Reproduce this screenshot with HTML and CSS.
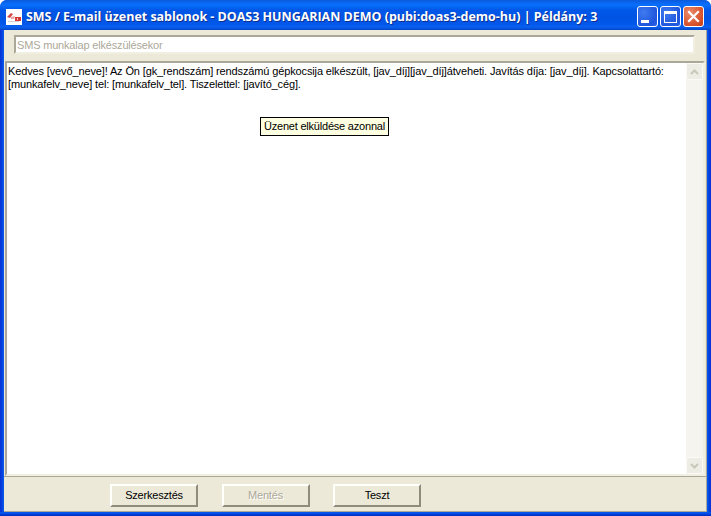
FILE: index.html
```
<!DOCTYPE html>
<html lang="hu">
<head>
<meta charset="utf-8">
<title>SMS / E-mail üzenet sablonok</title>
<link rel="stylesheet" href="styles.css">
</head>
<body>
<div class="window">
  <header class="titlebar">
    <svg class="app-icon" width="16" height="16" viewBox="0 0 16 16"><rect width="16" height="16" fill="#fff"/><path d="M1 8 L5 4 L7 5 L4 9 Z" fill="#d84848"/><path d="M5 8 L9 7 L8 10 L5 10 Z" fill="#eaa0a0"/><rect x="9" y="8" width="6" height="4" fill="#d83838"/><rect x="11" y="9" width="1" height="2" fill="#f4c0c0"/><rect x="2" y="12" width="11" height="1" fill="#d0d0d8"/></svg>
    <span class="title-text">SMS / E-mail üzenet sablonok - DOAS3 HUNGARIAN DEMO (pubi:doas3-demo-hu) | Példány: 3</span>
    <div class="caption-buttons">
      <div class="cap cap-blue"><span class="glyph-min"></span></div>
      <div class="cap cap-blue"><span class="glyph-max"></span></div>
      <div class="cap cap-red"><svg width="13" height="13" viewBox="0 0 13 13"><path d="M2 2 L11 11 M11 2 L2 11" stroke="#fff" stroke-width="2.2" stroke-linecap="square"/></svg></div>
    </div>
  </header>
  <div class="client">
    <div class="top-row"><div class="field">SMS munkalap elkészülésekor</div></div>
    <div class="memo">
      <div class="memo-text">Kedves [vevő_neve]! Az Ön [gk_rendszám] rendszámú gépkocsija elkészült, [jav_díj][jav_díj]átveheti. Javítás díja: [jav_díj]. Kapcsolattartó: [munkafelv_neve] tel: [munkafelv_tel]. Tiszelettel: [javító_cég].</div>
      <div class="scrollbar">
        <div class="sb-btn"><svg width="9" height="6" viewBox="0 0 9 6"><path d="M1 5 L4.5 1.5 L8 5" fill="none" stroke="#c9c7ba" stroke-width="2"/></svg></div>
        <div class="sb-track"></div>
        <div class="sb-btn"><svg width="9" height="6" viewBox="0 0 9 6"><path d="M1 1 L4.5 4.5 L8 1" fill="none" stroke="#c9c7ba" stroke-width="2"/></svg></div>
      </div>
      <div class="tooltip">Üzenet elküldése azonnal</div>
    </div>
    <footer class="actions">
      <div class="btn">Szerkesztés</div>
      <div class="btn btn-disabled">Mentés</div>
      <div class="btn">Teszt</div>
    </footer>
  </div>
</div>
</body>
</html>
```
FILE: styles.css
```
* { box-sizing: border-box; }
html, body { margin: 0; padding: 0; width: 711px; height: 516px; overflow: hidden; background: #fff; }
body { font-family: "Liberation Sans", Arial, sans-serif; font-size: 11px; color: #000; }
.window {
  width: 711px; height: 516px; display: flex; flex-direction: column;
  background:
    linear-gradient(0deg, #0028b8 0, #0038d0 1px, #0048e0 2px, #0a5cf0 4px, transparent 4px),
    linear-gradient(90deg, #0831d9 0, #0542dc 2px, #0a5cf0 4px, #0a5cf0 707px, #0542dc 709px, #0831d9 711px);
  border-radius: 7px 7px 0 0;
}
.titlebar {
  height: 30px; display: flex; align-items: center; padding: 3px 7px 0 6px; flex: none;
  background: linear-gradient(#0a5ad8 0, #0a63ee 2px, #0870fb 5px, #0058e8 10px, #0054e3 18px, #0057ea 24px, #0a61f0 27px, #0345c8 30px);
  border-radius: 7px 7px 0 0;
}
.app-icon { flex: none; margin-right: 4px; }
.title-text {
  flex: 1; color: #fff; font-family: "Open Sans", sans-serif; font-weight: 700; font-size: 12.5px;
  letter-spacing: -0.025px;
  white-space: nowrap; overflow: hidden; text-shadow: 1px 1px 0 #0f2e8c;
}
.caption-buttons { display: flex; gap: 2px; flex: none; margin-left: 4px; }
.cap {
  width: 21px; height: 21px; border: 1px solid #fff; border-radius: 3px;
  display: flex; align-items: center; justify-content: center; position: relative;
}
.cap-blue { background: radial-gradient(circle at 30% 30%, #3f7bf0, #1f55dc 70%, #2c62e6); }
.cap-red { background: radial-gradient(circle at 30% 30%, #ea8b6c, #d8532b 65%, #c63d18); }
.glyph-min { width: 8px; height: 3px; background: #fff; align-self: flex-end; margin: 0 5px 3px 0; }
.glyph-max { width: 13px; height: 12px; border: 1px solid #fff; border-top-width: 3px; }
.client {
  flex: 1; margin: 0 4px 4px; background: #ece9d8; display: flex; flex-direction: column; min-height: 0;
  border-bottom: 1px solid #aca899; border-right: 1px solid #aca899;
}
.top-row { height: 31px; padding: 5px 10px 0 10px; flex: none; }
.field {
  height: 19px; width: 681px; background: #fff; padding: 2px 1px;
  border: 2px solid; border-color: #aca899 #f1efe2 #f1efe2 #aca899;
  color: #aca899; line-height: 13px; white-space: nowrap; letter-spacing: -0.18px;
}
.memo {
  height: 415px; margin-left: 1px; flex: none; width: 700px; background: #fff; position: relative;
  display: flex; border: 2px solid; border-color: #aca899 #f1efe2 #f1efe2 #aca899;
}
.memo-text { flex: 1; padding: 2px 1px; line-height: 13px; letter-spacing: -0.133px; }
.scrollbar {
  width: 17px; flex: none; display: flex; flex-direction: column; background: #f5f4ee;
}
.sb-track { flex: 1; }
.sb-btn {
  height: 17px; flex: none; background: #eeede5; border: 1px solid #fbfaf5; border-radius: 2px;
  display: flex; align-items: center; justify-content: center;
}
.tooltip {
  position: absolute; left: 253px; top: 54px; height: 19px; padding: 0 3px; line-height: 17px;
  background: #ffffe1; border: 1px solid #000; white-space: nowrap; letter-spacing: -0.21px;
}
.actions { flex: 1; display: flex; padding: 7px 0 0 106px; gap: 23.5px; align-items: flex-start;
  border-top: 1px solid #aca899; }
.btn {
  width: 88px; height: 23px; background: #ece9d8; line-height: 19px; text-align: center;
  border: 2px solid; border-color: #fffffb #8f8c7d #8f8c7d #fffffb; font-size: 11px; letter-spacing: -0.2px;
}
.btn-disabled { color: #aca899; text-shadow: 1px 1px 0 #fff; }
```
